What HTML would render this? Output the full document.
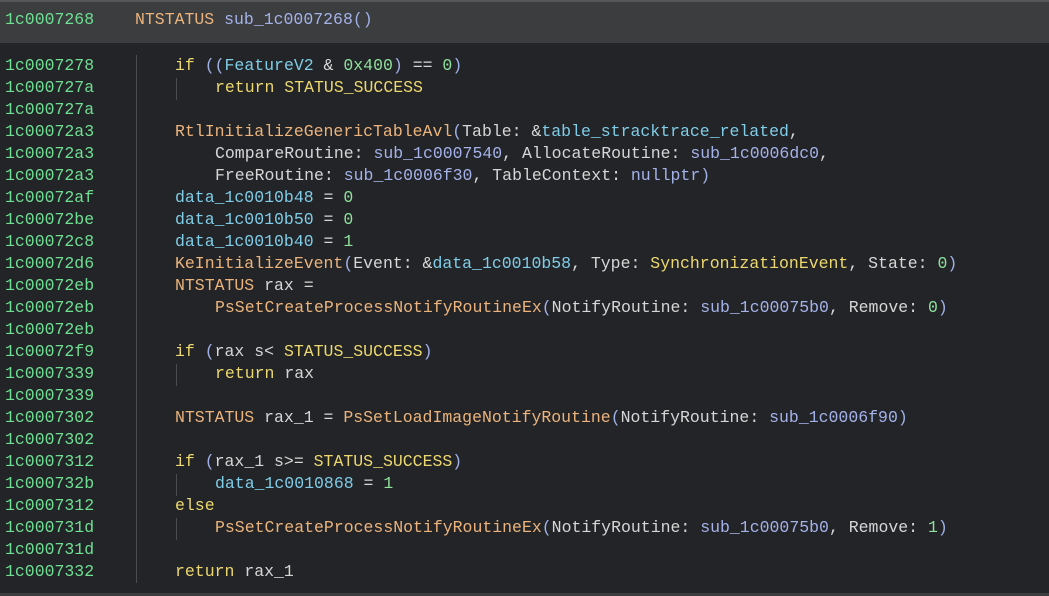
<!DOCTYPE html><html><head><style>
html,body{margin:0;padding:0;background:#232427;width:1049px;height:596px;overflow:hidden}
body{font-family:"Liberation Mono",monospace;font-size:16.5px;color:#d6d6d6;position:relative}
.hdr{position:absolute;left:0;top:0;width:1049px;height:43px;background:#3b3d3f;border-top:2px solid #55575a;box-sizing:border-box}
.row{position:absolute;left:0;height:22px;line-height:22px;white-space:pre}
.a{position:absolute;left:5px;color:#6fdf93}
.c{position:absolute;white-space:pre}
.k{color:#ecd86e}.f{color:#ecb47c}.s{color:#a4b2ea}.v{color:#7fcde8}.n{color:#8fe19c}.p{color:#9fb0e6}.g{color:#c8c8c8}
.bar{position:absolute;width:1px;background:#4a4c4f}
.bot{position:absolute;left:0;top:593px;width:1049px;height:3px;background:#3b3d3f}
</style></head><body>
<div class="hdr"></div>
<div class="row" style="top:9px"><span class="a">1c0007268</span><span class="c" style="left:135px"><span class="f">NTSTATUS</span> <span class="s">sub_1c0007268</span><span class="p">()</span></span></div>
<div class="bar" style="left:136px;top:55px;height:528px"></div>
<div class="bar" style="left:176px;top:78px;height:22px"></div>
<div class="bar" style="left:176px;top:364px;height:22px"></div>
<div class="bar" style="left:176px;top:474px;height:22px"></div>
<div class="bar" style="left:176px;top:518px;height:22px"></div>
<div class="bot"></div>

<div class="row" style="top:55px"><span class="a">1c0007278</span><span class="c" style="left:175px"><span class="k">if</span> <span class="p">((</span><span class="v">FeatureV2</span> &amp; <span class="n">0x400</span><span class="p">)</span> == <span class="n">0</span><span class="p">)</span></span></div>
<div class="row" style="top:77px"><span class="a">1c000727a</span><span class="c" style="left:215px"><span class="k">return STATUS_SUCCESS</span></span></div>
<div class="row" style="top:99px"><span class="a">1c000727a</span></div>
<div class="row" style="top:121px"><span class="a">1c00072a3</span><span class="c" style="left:175px"><span class="f">RtlInitializeGenericTableAvl</span><span class="p">(</span>Table: &amp;<span class="v">table_stracktrace_related</span>,</span></div>
<div class="row" style="top:143px"><span class="a">1c00072a3</span><span class="c" style="left:215px">CompareRoutine: <span class="s">sub_1c0007540</span>, AllocateRoutine: <span class="s">sub_1c0006dc0</span>,</span></div>
<div class="row" style="top:165px"><span class="a">1c00072a3</span><span class="c" style="left:215px">FreeRoutine: <span class="s">sub_1c0006f30</span>, TableContext: <span class="s">nullptr</span><span class="p">)</span></span></div>
<div class="row" style="top:187px"><span class="a">1c00072af</span><span class="c" style="left:175px"><span class="v">data_1c0010b48</span> = <span class="n">0</span></span></div>
<div class="row" style="top:209px"><span class="a">1c00072be</span><span class="c" style="left:175px"><span class="v">data_1c0010b50</span> = <span class="n">0</span></span></div>
<div class="row" style="top:231px"><span class="a">1c00072c8</span><span class="c" style="left:175px"><span class="v">data_1c0010b40</span> = <span class="n">1</span></span></div>
<div class="row" style="top:253px"><span class="a">1c00072d6</span><span class="c" style="left:175px"><span class="f">KeInitializeEvent</span><span class="p">(</span>Event: &amp;<span class="v">data_1c0010b58</span>, Type: <span class="k">SynchronizationEvent</span>, State: <span class="n">0</span><span class="p">)</span></span></div>
<div class="row" style="top:275px"><span class="a">1c00072eb</span><span class="c" style="left:175px"><span class="f">NTSTATUS</span> rax =</span></div>
<div class="row" style="top:297px"><span class="a">1c00072eb</span><span class="c" style="left:215px"><span class="f">PsSetCreateProcessNotifyRoutineEx</span><span class="p">(</span>NotifyRoutine: <span class="s">sub_1c00075b0</span>, Remove: <span class="n">0</span><span class="p">)</span></span></div>
<div class="row" style="top:319px"><span class="a">1c00072eb</span></div>
<div class="row" style="top:341px"><span class="a">1c00072f9</span><span class="c" style="left:175px"><span class="k">if</span> <span class="p">(</span>rax s&lt; <span class="k">STATUS_SUCCESS</span><span class="p">)</span></span></div>
<div class="row" style="top:363px"><span class="a">1c0007339</span><span class="c" style="left:215px"><span class="k">return</span> rax</span></div>
<div class="row" style="top:385px"><span class="a">1c0007339</span></div>
<div class="row" style="top:407px"><span class="a">1c0007302</span><span class="c" style="left:175px"><span class="f">NTSTATUS</span> rax_1 = <span class="f">PsSetLoadImageNotifyRoutine</span><span class="p">(</span>NotifyRoutine: <span class="s">sub_1c0006f90</span><span class="p">)</span></span></div>
<div class="row" style="top:429px"><span class="a">1c0007302</span></div>
<div class="row" style="top:451px"><span class="a">1c0007312</span><span class="c" style="left:175px"><span class="k">if</span> <span class="p">(</span>rax_1 s&gt;= <span class="k">STATUS_SUCCESS</span><span class="p">)</span></span></div>
<div class="row" style="top:473px"><span class="a">1c000732b</span><span class="c" style="left:215px"><span class="v">data_1c0010868</span> = <span class="n">1</span></span></div>
<div class="row" style="top:495px"><span class="a">1c0007312</span><span class="c" style="left:175px"><span class="k">else</span></span></div>
<div class="row" style="top:517px"><span class="a">1c000731d</span><span class="c" style="left:215px"><span class="f">PsSetCreateProcessNotifyRoutineEx</span><span class="p">(</span>NotifyRoutine: <span class="s">sub_1c00075b0</span>, Remove: <span class="n">1</span><span class="p">)</span></span></div>
<div class="row" style="top:539px"><span class="a">1c000731d</span></div>
<div class="row" style="top:561px"><span class="a">1c0007332</span><span class="c" style="left:175px"><span class="k">return</span> rax_1</span></div>
</body></html>
